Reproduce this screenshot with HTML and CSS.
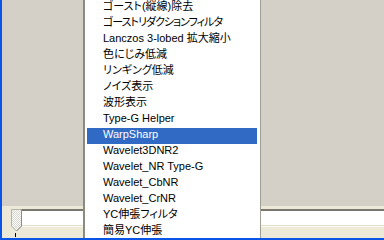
FILE: index.html
```html
<!DOCTYPE html>
<html lang="ja">
<head>
<meta charset="utf-8">
<link rel="stylesheet" href="styles.css">
</head>
<body>
<div class="window">
  <div class="panel"></div>
  <div class="trackbar">
    <div class="track"></div>
    <svg class="thumb" width="11" height="23" viewBox="0 0 11 23">
      <defs>
        <pattern id="dither" width="2" height="2" patternUnits="userSpaceOnUse">
          <rect width="2" height="2" fill="#ffffff"/>
          <rect width="1" height="1" fill="#d8d6cc"/>
          <rect x="1" y="1" width="1" height="1" fill="#d8d6cc"/>
        </pattern>
      </defs>
      <path d="M0.5 0.5 H10.5 V17 L5.5 22 L0.5 17 Z" fill="url(#dither)" stroke="#b5b3a8"/>
      <path d="M10.5 0.5 V17 L5.5 22" fill="none" stroke="#8e8c82"/>
    </svg>
    <div class="tick"></div>
  </div>
  <ul class="dropdown">
    <li class="item">ゴースト(縦線)除去</li>
    <li class="item tight">ゴーストリダクションフィルタ</li>
    <li class="item">Lanczos 3-lobed 拡大縮小</li>
    <li class="item">色にじみ低減</li>
    <li class="item">リンギング低減</li>
    <li class="item">ノイズ表示</li>
    <li class="item">波形表示</li>
    <li class="item">Type-G Helper</li>
    <li class="item selected">WarpSharp</li>
    <li class="item">Wavelet3DNR2</li>
    <li class="item">Wavelet_NR Type-G</li>
    <li class="item">Wavelet_CbNR</li>
    <li class="item">Wavelet_CrNR</li>
    <li class="item">YC伸張フィルタ</li>
    <li class="item">簡易YC伸張</li>
  </ul>
</div>
</body>
</html>
```
FILE: styles.css
```css
html, body {
  margin: 0;
  padding: 0;
  background: #d4d0c8;
}

.window {
  position: relative;
  width: 384px;
  height: 240px;
  box-sizing: border-box;
  border-left: 2px solid #0a55e8;
  border-bottom: 2px solid #0a55e8;
  display: flex;
  flex-direction: column;
  overflow: hidden;
  font-family: "Liberation Sans", "Noto Sans CJK JP", sans-serif;
}

.panel {
  flex: 1;
  background: #d4d0c8;
}

.trackbar {
  position: relative;
  height: 32px;
  box-sizing: border-box;
  background: #ece9d8;
  padding-top: 3px;
  padding-left: 19px;
}

.track {
  height: 14px;
  background: #ffffff;
  border-top: 2px solid #7a786e;
  border-bottom: 1px solid #e2dfcc;
  box-shadow: 0 1px 0 #fbfaf3;
}

.thumb {
  position: absolute;
  left: 9px;
  top: 3px;
  display: block;
}

.tick {
  position: absolute;
  left: 13px;
  top: 27px;
  width: 1px;
  height: 4px;
  background: #000000;
}

.dropdown {
  position: absolute;
  left: 81px;
  top: 0;
  width: 178px;
  height: 240px;
  box-sizing: border-box;
  margin: 0;
  padding: 0 3px 0 2px;
  list-style: none;
  background: #ffffff;
  border-left: 2px solid #8c8b80;
  border-right: 1px solid #a09f94;
}

.item {
  height: 16px;
  box-sizing: border-box;
  padding-left: 16px;
  font-size: 11px;
  line-height: 12px;
  color: #000000;
  white-space: nowrap;
  font-feature-settings: "palt";
}

.tight {
  letter-spacing: -1px;
}

.selected {
  background: #316ac5;
  color: #ffffff;
}
```
